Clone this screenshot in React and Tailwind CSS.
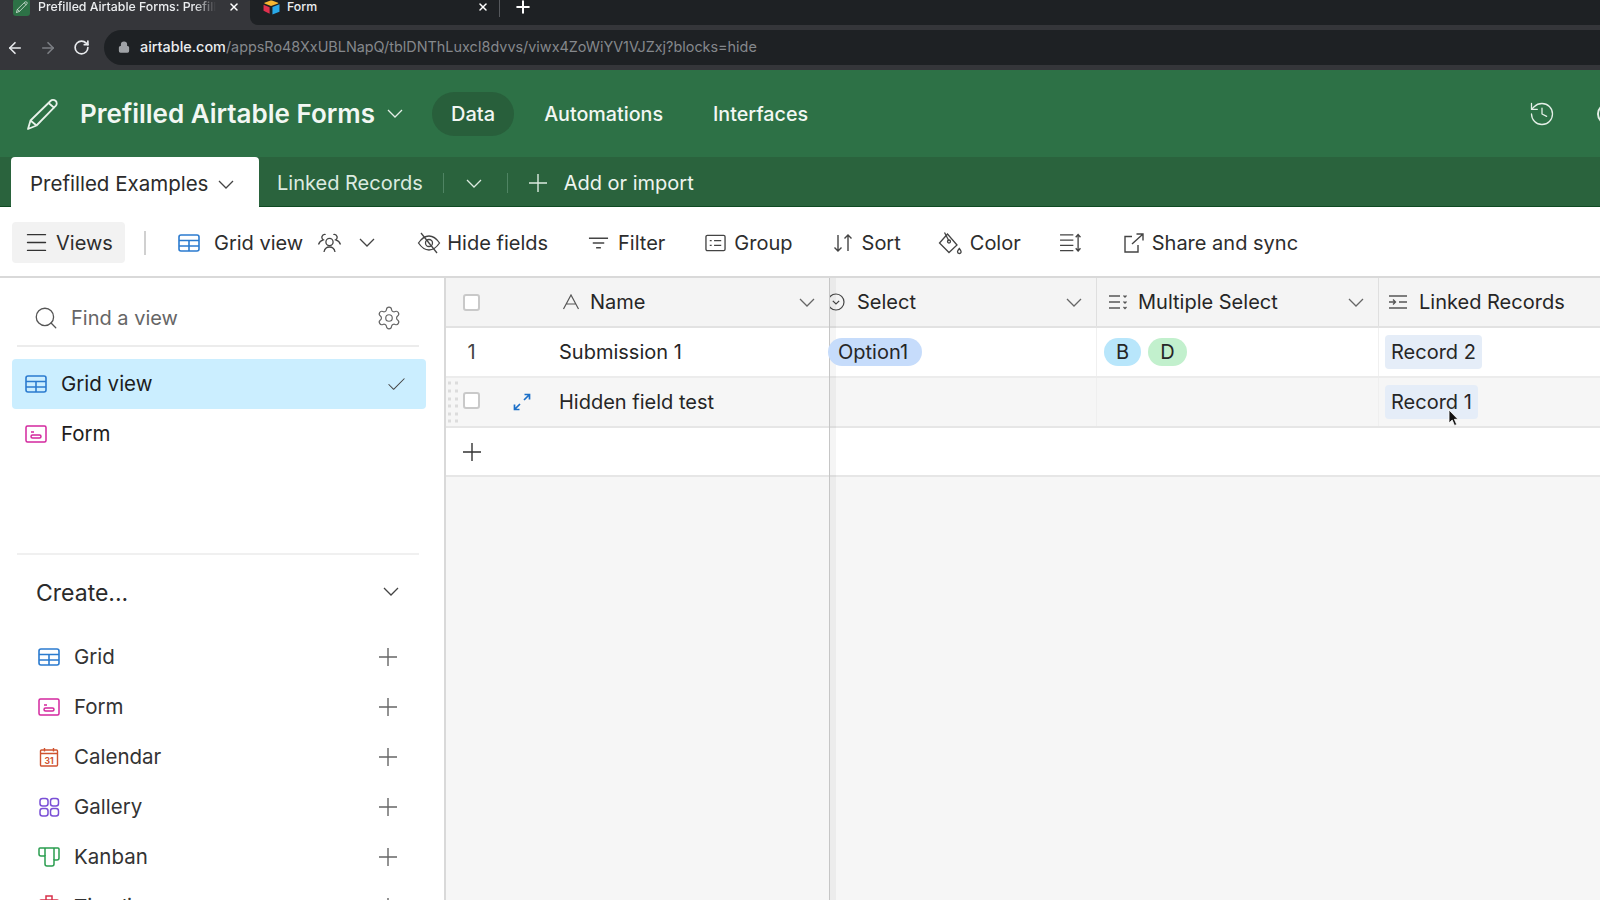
import React from 'react';
import { ArrowLeft, ArrowRight, RotateCw, Lock, X, History, Search, Settings, Check, Menu } from 'lucide-react';

const Chevron = ({ className }) => (
  <svg viewBox="0 0 16 9" fill="none" stroke="currentColor" strokeWidth="1.3" className={`w-[16px] h-[9px] shrink-0 ${className}`}>
    <path d="M1 1l7 7 7-7" />
  </svg>
);

const Cross = ({ className }) => (
  <svg viewBox="0 0 18 18" fill="none" stroke="currentColor" strokeWidth="1.4" className={`w-[18px] h-[18px] shrink-0 ${className}`}>
    <path d="M9 0v18M0 9h18" />
  </svg>
);

const GridIcon = ({ className }) => (
  <svg viewBox="0 0 22 18" fill="none" stroke="currentColor" strokeWidth="1.6" className={className}>
    <rect x="1" y="1" width="20" height="16" rx="2" />
    <path d="M1 6.5h20M1 12h20M11 6.5V17" />
  </svg>
);

const FormIcon = ({ className }) => (
  <svg viewBox="0 0 22 18" fill="none" stroke="currentColor" strokeWidth="1.5" className={className}>
    <rect x="1" y="1" width="20" height="16" rx="1.5" />
    <path d="M6 7h3" />
    <rect x="6" y="10" width="10" height="3" rx="1.5" />
  </svg>
);

const CalendarIcon = ({ className }) => (
  <svg viewBox="0 0 22 20" fill="none" stroke="currentColor" strokeWidth="1.4" className={className}>
    <rect x="2.5" y="3" width="17" height="16" rx="1" />
    <path d="M2.5 6.5h17M6.5 1v3.500M15.500 1v3.500" />
    <text x="11" y="16.5" textAnchor="middle" fontSize="8.5" fontWeight="700" stroke="none" fill="currentColor" fontFamily="Inter, sans-serif">31</text>
  </svg>
);

const GalleryIcon = ({ className }) => (
  <svg viewBox="0 0 22 20" fill="none" stroke="currentColor" strokeWidth="1.5" className={className}>
    <rect x="2" y="1.500" width="8" height="7.500" rx="2.500" />
    <rect x="12.500" y="1.500" width="8" height="7.500" rx="2.500" />
    <rect x="2" y="11.500" width="8" height="7.500" rx="2.500" />
    <rect x="12.500" y="11.500" width="8" height="7.500" rx="2.500" />
  </svg>
);

const KanbanIcon = ({ className }) => (
  <svg viewBox="0 0 22 20" fill="none" stroke="currentColor" strokeWidth="1.5" className={className}>
    <path d="M2 1h18a1 1 0 0 1 1 1v9a2 2 0 0 1-2 2h-3v4a2 2 0 0 1-2 2H9a2 2 0 0 1-2-2V9H3a2 2 0 0 1-2-2V2a1 1 0 0 1 1-1z" />
    <path d="M7 1v8M16 1v12" />
  </svg>
);

const TimelineIcon = ({ className }) => (
  <svg viewBox="0 0 22 24" fill="none" stroke="currentColor" strokeWidth="1.5" className={className}>
    <path d="M3 5h16a1.500 1.500 0 0 1 1.500 1.500V22H1.500V6.500A1.500 1.500 0 0 1 3 5z" />
    <path d="M8 5V1h6v4M8 1h6" />
  </svg>
);

const PeopleIcon = ({ className }) => (
  <svg viewBox="0 0 24 20" fill="none" stroke="currentColor" strokeWidth="1.3" className={className}>
    <circle cx="12" cy="9" r="3.600" />
    <path d="M6.500 19c.6-3.200 2.600-5 5.500-5s4.900 1.800 5.500 5" />
    <path d="M8.200 1.500A3 3 0 0 0 4.500 3.500c-.4 1.400.2 2.600 1.300 3.300C3.400 7.500 1.800 9 1 11.500" />
    <path d="M15.800 1.500a3 3 0 0 1 3.700 2c.4 1.400-.2 2.600-1.300 3.300 2.400.7 4 2.200 4.800 4.700" />
  </svg>
);

const EyeOffIcon = ({ className }) => (
  <svg viewBox="0 0 24 22" fill="none" stroke="currentColor" strokeWidth="1.3" className={className}>
    <path d="M1.500 11C5 5.800 8.500 4 12 4s7 1.800 10.500 7c-3.500 5.200-7 7-10.500 7s-7-1.800-10.500-7z" />
    <circle cx="12" cy="11" r="3.500" />
    <path d="M4 1l16 20" />
  </svg>
);

const FilterIcon = ({ className }) => (
  <svg viewBox="0 0 22 14" fill="none" stroke="currentColor" strokeWidth="1.4" className={className}>
    <path d="M1 2h20M5 7h12M8.500 12h5" />
  </svg>
);

const GroupIcon = ({ className }) => (
  <svg viewBox="0 0 22 18" fill="none" stroke="currentColor" strokeWidth="1.4" className={className}>
    <rect x="1" y="1" width="20" height="16" rx="1.500" />
    <path d="M5 6.500h2M5 11.500h2M9.500 6.500H17M9.500 11.500H17" />
  </svg>
);

const SortIcon = ({ className }) => (
  <svg viewBox="0 0 20 20" fill="none" stroke="currentColor" strokeWidth="1.4" className={className}>
    <path d="M5 2v16M1.500 14.500 5 18l3.500-3.500M15 18V2M11.500 5.500 15 2l3.500 3.500" />
  </svg>
);

const BucketIcon = ({ className }) => (
  <svg viewBox="0 0 24 24" fill="none" stroke="currentColor" strokeWidth="1.3" className={className}>
    <path d="M9.500 3 1.500 12l9.500 9.500L19 14z" />
    <path d="M6.500 1.500 11 10" />
    <circle cx="11" cy="10.500" r="1.500" />
    <path d="M21.300 17.500c-1.200 1.500-1.800 2.400-1.800 3.200a1.800 1.800 0 0 0 3.600 0c0-.8-.6-1.700-1.800-3.200z" />
  </svg>
);

const RowHeightIcon = ({ className }) => (
  <svg viewBox="0 0 24 20" fill="none" stroke="currentColor" strokeWidth="1.4" className={className}>
    <path d="M1 2h14M1 7.500h14M1 13h14M1 18.500h14" />
    <path d="M20 2v16.500M17.500 4.500 20 1.500l2.500 3M17.500 16 20 19l2.500-3" />
  </svg>
);

const ShareIcon = ({ className }) => (
  <svg viewBox="0 0 20 20" fill="none" stroke="currentColor" strokeWidth="1.4" className={className}>
    <path d="M8 3.500H1v15.500h13v-7" />
    <path d="M8 11 18.500 1.500M12.500 1h6.500v6.500" />
  </svg>
);

const Pencil = ({ className }) => (
  <svg viewBox="0 0 32 32" fill="none" stroke="currentColor" strokeWidth="1.8" strokeLinejoin="round" className={className}>
    <path d="M1 31l2.500-8.500L23.500 3c1.200-1.200 3.500-1.400 5-.2 1.500 1.300 1.600 3.600.4 4.900L9.500 27.500z" />
    <path d="M3.500 22.500l6 5M21.500 5l6 5" />
  </svg>
);

const AirtableLogo = () => (
  <svg viewBox="0 0 18 16" className="w-[17px] h-[15px] shrink-0">
    <path d="M8 .5 1.500 3c-.3.100-.3.500 0 .6L8.500 6.400l7.500-2.800c.3-.100.3-.5 0-.6L9.500.5z" fill="#f7b731" />
    <path d="M10 7.500v8l7.500-3V4.600z" fill="#29a9e8" />
    <path d="M.5 5v6.500L7 14.600V7.800z" fill="#e0304e" />
  </svg>
);

const SelectIcon = ({ className }) => (
  <svg viewBox="0 0 18 18" fill="none" stroke="currentColor" strokeWidth="1.2" className={className}>
    <circle cx="9" cy="9" r="8" />
    <path d="M5.800 7.800 9 11l3.200-3.200" />
  </svg>
);

const MultiSelectIcon = ({ className }) => (
  <svg viewBox="0 0 20 16" fill="none" stroke="currentColor" strokeWidth="1.3" className={className}>
    <path d="M1 2h11M1 8h11M1 14h11M15.500 1.500 17 3l1.500-1.500M15.500 7.500 17 9l1.500-1.500M15.500 13 17 14.500 18.500 13" />
  </svg>
);

const LinkedIcon = ({ className }) => (
  <svg viewBox="0 0 20 16" fill="none" stroke="currentColor" strokeWidth="1.3" className={className}>
    <path d="M1 2h18M11 8h8M1 14h18M1 8h6M5 5.500 7.500 8 5 10.500" />
  </svg>
);

const NameIcon = ({ className }) => (
  <svg viewBox="0 0 18 16" fill="none" stroke="currentColor" strokeWidth="1.2" className={className}>
    <path d="M1.500 15 9 1l7.500 14M4.500 10h9" />
  </svg>
);

const ExpandIcon = ({ className }) => (
  <svg viewBox="0 0 18 18" fill="none" stroke="currentColor" strokeWidth="1.700" className={className}>
    <path d="M11 7l5-5M11.500 1.500H16.500V6.500M7 11l-5 5M1.500 11.500V16.500H6.500" />
  </svg>
);

const DragDots = () => (
  <svg viewBox="0 0 11 42" fill="#dcdcdc" className="w-[11px] h-[42px] shrink-0">
    {[2, 10, 18, 25, 33, 40].map((y) => (
      <g key={y}>
        <rect x="0" y={y - 1.5} width="3" height="3" />
        <rect x="7" y={y - 1.5} width="3" height="3" />
      </g>
    ))}
  </svg>
);

const Checkbox = () => (
  <div className="w-[17px] h-[17px] rounded-[3px] border-2 border-[#c9c9c9] bg-white shrink-0" />
);

const createItems = [
  { label: 'Grid', Icon: GridIcon, color: 'text-[#2b7bcf] h-[18px]' },
  { label: 'Form', Icon: FormIcon, color: 'text-[#d3279e] h-[18px]' },
  { label: 'Calendar', Icon: CalendarIcon, color: 'text-[#cf5330] h-[20px]' },
  { label: 'Gallery', Icon: GalleryIcon, color: 'text-[#7a4fd6] h-[20px]' },
  { label: 'Kanban', Icon: KanbanIcon, color: 'text-[#2a9d4f] h-[20px]' },
  { label: 'Timeline', Icon: TimelineIcon, color: 'text-[#d8304a] h-[24px]' },
];

const BrowserChrome = () => (
  <div className="shrink-0">
    <div className="h-[25px] bg-[#35363a] flex text-[12.300px] font-medium">
      <div className="w-[250px] h-full flex items-center pb-[11px] pl-[13px] text-[#eceef0]">
        <div className="w-[17px] h-[17px] rounded-[3px] bg-[#2d7146] flex items-center justify-center shrink-0">
          <Pencil className="w-[12px] h-[12px] text-white" />
        </div>
        <span className="ml-[8px] w-[178px] overflow-hidden whitespace-nowrap [mask-image:linear-gradient(to_right,black_88%,transparent)]">Prefilled Airtable Forms: Prefill</span>
        <X className="w-[12px] h-[12px] ml-[12px] text-white shrink-0" strokeWidth={3} />
      </div>
      <div className="flex-1 h-full bg-[#1e2124] rounded-bl-lg flex items-center pb-[11px]">
        <div className="w-[249px] flex items-center pl-[13px] text-[#eceef0]">
          <AirtableLogo />
          <span className="ml-[7px]">Form</span>
          <X className="w-[12px] h-[12px] ml-auto mr-[10px] text-white" strokeWidth={3} />
        </div>
        <div className="w-px h-[20px] bg-[#55585c]" />
        <Cross className="ml-[14px] text-white scale-75 [stroke-width:2.6]" />
      </div>
    </div>
    <div className="h-[45px] bg-[#35363a] flex items-center">
      <ArrowLeft className="w-[18px] h-[18px] ml-[6px] text-[#e8eaed]" strokeWidth={2.200} />
      <ArrowRight className="w-[18px] h-[18px] ml-[15px] text-[#7c7f84]" strokeWidth={2.200} />
      <RotateCw className="w-[17px] h-[17px] ml-[16px] text-[#e8eaed]" strokeWidth={2.400} />
      <div className="ml-[14px] -mt-[1px] flex-1 h-[35px] bg-[#1e2124] rounded-l-full flex items-center pl-[14px] text-[14.400px] whitespace-nowrap overflow-hidden">
        <Lock className="w-[12px] h-[12px] text-[#a0a3a7] shrink-0" fill="#a0a3a7" strokeWidth={2.500} />
        <span className="ml-[10px] text-[#eceef0] font-medium">airtable.com</span>
        <span className="text-[#85888c]">/appsRo48XxUBLNapQ/tblDNThLuxcI8dvvs/viwx4ZoWiYV1VJZxj?blocks=hide</span>
      </div>
    </div>
  </div>
);

const AppHeader = () => (
  <div className="h-[87px] bg-[#2d7146] flex items-center text-[#f2f7f3] shrink-0 overflow-hidden">
    <Pencil className="w-[32px] h-[32px] ml-[27px] text-[#e8f2ea]" />
    <span className="ml-[21px] text-[26px] font-semibold whitespace-nowrap">Prefilled Airtable Forms</span>
    <Chevron className="ml-[12px] text-[#e4efe7]" />
    <div className="ml-[29px] h-[44px] px-[19px] rounded-full bg-[#285f3b] flex items-center text-[20px] font-medium">Data</div>
    <span className="ml-[30px] mt-[2px] text-[19.700px] font-medium">Automations</span>
    <span className="ml-[50px] mt-[2px] text-[19.700px] font-medium">Interfaces</span>
    <History className="w-[28px] h-[28px] ml-auto mr-[41px] text-[#e4efe7]" strokeWidth={1.100} />
    <div className="w-[22px] h-[22px] -mr-[19px] rounded-full border-2 border-[#e4efe7] shrink-0" />
  </div>
);

const TabBar = () => (
  <div className="h-[50px] bg-[#2a633d] border-b border-[#0f4a22] flex items-center text-[20px] shrink-0">
    <div className="ml-[11px] w-[248px] h-[50px] mt-[1px] pt-[4px] bg-white rounded-t-[4px] flex items-center pl-[19px] text-[#2b2b2b] text-[20.500px]">
      <span>Prefilled Examples</span>
      <Chevron className="ml-[10px] text-[#444]" />
    </div>
    <div className="flex items-center pt-[3px]">
      <span className="ml-[18px] text-[#dcebe0]">Linked Records</span>
      <div className="w-px h-[20px] bg-[#4f8463] ml-[20px]" />
      <Chevron className="ml-[22px] text-[#dcebe0]" />
      <div className="w-px h-[20px] bg-[#4f8463] ml-[25px]" />
      <Cross className="ml-[21px] text-[#dcebe0]" />
      <span className="ml-[17px] text-[#eef5f0]">Add or import</span>
    </div>
  </div>
);

const Toolbar = () => (
  <div className="h-[71px] pt-[2px] bg-white border-b-2 border-[#d9d9d9] flex items-center text-[20px] text-[#2d2d2d] shrink-0 whitespace-nowrap">
    <div className="ml-[12px] w-[113px] h-[41px] rounded-[4px] bg-[#f2f2f2] flex items-center pl-[11px]">
      <Menu className="w-[27px] h-[27px] text-[#333]" strokeWidth={1.200} />
      <span className="ml-[6px]">Views</span>
    </div>
    <div className="w-[2px] h-[24px] bg-[#d0d0d0] ml-[19px]" />
    <GridIcon className="w-[22px] h-[18px] ml-[32px] text-[#2b7bcf]" />
    <span className="ml-[14px]">Grid view</span>
    <PeopleIcon className="w-[25px] h-[20px] ml-[14px] text-[#444]" />
    <Chevron className="ml-[17px] text-[#444]" />
    <EyeOffIcon className="w-[24px] h-[22px] ml-[42px] text-[#444]" />
    <span className="ml-[6px]">Hide fields</span>
    <FilterIcon className="w-[21px] h-[14px] ml-[40px] text-[#444]" />
    <span className="ml-[9px]">Filter</span>
    <GroupIcon className="w-[21px] h-[18px] ml-[40px] text-[#444]" />
    <span className="ml-[8px]">Group</span>
    <SortIcon className="w-[20px] h-[20px] ml-[40px] text-[#444]" />
    <span className="ml-[9px]">Sort</span>
    <BucketIcon className="w-[24px] h-[24px] ml-[37px] text-[#444]" />
    <span className="ml-[8px]">Color</span>
    <RowHeightIcon className="w-[23px] h-[19px] ml-[38px] text-[#444]" />
    <ShareIcon className="w-[20px] h-[20px] ml-[42px] text-[#444]" />
    <span className="ml-[8px]">Share and sync</span>
  </div>
);

const Sidebar = () => (
  <aside className="w-[446px] border-r-2 border-[#d9d9d9] bg-white shrink-0 text-[20.500px] text-[#262626]">
    <div className="h-[67px] pt-[13px] flex items-center pl-[33px] text-[20px]">
      <Search className="w-[26px] h-[26px] text-[#555]" strokeWidth={1.200} />
      <span className="ml-[12px] text-[#666]">Find a view</span>
      <Settings className="w-[26px] h-[26px] ml-auto mr-[42px] text-[#666]" strokeWidth={1.100} />
    </div>
    <div className="h-[2px] bg-[#ececec] ml-[17px] mr-[25px]" />
    <div className="mt-[12px] ml-[12px] w-[414px] h-[50px] rounded-[4px] bg-[#cbeeff] flex items-center pl-[13px] text-[#1d1d1d]">
      <GridIcon className="w-[22px] h-[18px] text-[#2b7bcf]" />
      <span className="ml-[14px]">Grid view</span>
      <Check className="w-[23px] h-[23px] ml-auto mr-[18px] text-[#444]" strokeWidth={1.100} />
    </div>
    <div className="ml-[12px] w-[414px] h-[50px] flex items-center pl-[13px] text-[#1d1d1d]">
      <FormIcon className="w-[22px] h-[18px] text-[#d3279e]" />
      <span className="ml-[14px]">Form</span>
    </div>
    <div className="h-[2px] bg-[#f0f0f0] ml-[17px] mr-[25px] mt-[94px]" />
    <div className="h-[77px] pb-[1px] flex items-center pl-[36px] pr-[45px]">
      <span className="text-[23px] text-[#2b2b2b]">Create...</span>
      <Chevron className="ml-auto -mt-[4px] text-[#444]" />
    </div>
    {createItems.map(({ label, Icon, color }) => (
      <div key={label} className="h-[50px] flex items-center pl-[38px] pr-[47px]">
        <div className="w-[22px] flex justify-center shrink-0">
          <Icon className={`w-[22px] ${color}`} />
        </div>
        <span className="ml-[14px] text-[#333]">{label}</span>
        <Cross className="ml-auto text-[#666]" />
      </div>
    ))}
  </aside>
);

const GridPane = () => (
  <div className="flex-1 min-w-0 flex bg-[#f6f6f6] text-[20px] text-[#262626] overflow-hidden">
    {/* frozen columns */}
    <div className="w-[384px] shrink-0 border-r border-[#c6c6c6]">
      <div className="h-[50px] bg-[#f4f4f4] border-b-2 border-[#e2e2e2] flex items-center pl-[17px]">
        <Checkbox />
        <NameIcon className="w-[18px] h-[16px] ml-[82px] text-[#555]" />
        <span className="ml-[10px]">Name</span>
        <Chevron className="ml-auto mr-[14px] text-[#666]" />
      </div>
      <div className="h-[50px] bg-white border-b-2 border-[#ececec] flex items-center">
        <span className="w-[51px] text-center text-[#444]">1</span>
        <span className="ml-[62px]">Submission 1</span>
      </div>
      <div className="h-[50px] bg-[#f6f6f6] border-b-2 border-[#e6e6e6] flex items-center pl-[2px]">
        <DragDots />
        <div className="ml-[4px] -mt-[4px]"><Checkbox /></div>
        <ExpandIcon className="w-[18px] h-[18px] ml-[33px] text-[#1b6fc8]" />
        <span className="ml-[28px]">Hidden field test</span>
      </div>
      <div className="h-[49px] bg-white border-b-2 border-[#e6e6e6] flex items-center pl-[17px]">
        <Cross className="text-[#333]" />
      </div>
    </div>

    {/* scrolling columns */}
    <div className="relative flex-1 min-w-0">
      <div className="absolute top-0 bottom-0 left-0 w-[6px] bg-black/[0.04] pointer-events-none" />
      <div className="h-[50px] bg-[#f4f4f4] border-b-2 border-[#e2e2e2] flex">
        <div className="w-[267px] h-full flex items-center border-r border-[#dfdfdf] overflow-hidden shrink-0">
          <SelectIcon className="w-[18px] h-[18px] -ml-[3px] text-[#444] shrink-0" />
          <span className="ml-[12px] whitespace-nowrap">Select</span>
          <Chevron className="ml-auto mr-[14px] text-[#666]" />
        </div>
        <div className="w-[282px] h-full flex items-center border-r border-[#dfdfdf] pl-[11px] shrink-0">
          <MultiSelectIcon className="w-[20px] h-[16px] text-[#555]" />
          <span className="ml-[10px] whitespace-nowrap">Multiple Select</span>
          <Chevron className="ml-auto mr-[14px] text-[#666]" />
        </div>
        <div className="h-full flex items-center pl-[9px]">
          <LinkedIcon className="w-[20px] h-[16px] text-[#555]" />
          <span className="ml-[11px] whitespace-nowrap">Linked Records</span>
        </div>
      </div>
      <div className="h-[50px] bg-white border-b-2 border-[#ececec] flex">
        <div className="w-[267px] h-full border-r border-[#f0f0f0] flex items-center shrink-0">
          <span className="relative -ml-[2px] h-[28px] pl-[10px] pr-[14px] rounded-full bg-[#c6dcfb] flex items-center">Option1</span>
        </div>
        <div className="w-[282px] h-full border-r border-[#f0f0f0] flex items-center pl-[7px] gap-[7px] shrink-0">
          <span className="w-[37px] h-[28px] rounded-full bg-[#b8e6fb] flex items-center justify-center">B</span>
          <span className="w-[39px] h-[28px] rounded-full bg-[#c2f0cd] flex items-center justify-center">D</span>
        </div>
        <div className="h-full flex items-center pl-[6px]">
          <span className="h-[34px] px-[6px] rounded-[4px] bg-[#e5edf8] flex items-center whitespace-nowrap">Record 2</span>
        </div>
      </div>
      <div className="h-[50px] bg-[#f6f6f6] border-b-2 border-[#e6e6e6] flex">
        <div className="w-[267px] h-full border-r border-[#efefef] shrink-0" />
        <div className="w-[282px] h-full border-r border-[#efefef] shrink-0" />
        <div className="relative h-full flex items-center pl-[6px]">
          <span className="h-[34px] px-[6px] rounded-[4px] bg-[#e5edf8] flex items-center whitespace-nowrap">Record 1</span>
          {/* mouse pointer from the recording */}
          <svg viewBox="0 0 12 18" className="absolute left-[69px] top-[31px] w-[12px] h-[18px]">
            <path d="M1 1v13l3.200-3 2.300 5.500 2.200-1-2.300-5.200H10z" fill="#111" stroke="#fff" strokeWidth="0.800" />
          </svg>
        </div>
      </div>
      <div className="h-[49px] bg-white border-b-2 border-[#e6e6e6]" />
    </div>
  </div>
);

export default function App() {
  return (
    <div className="h-screen w-full overflow-hidden flex flex-col font-['Inter',sans-serif] bg-white">
      <BrowserChrome />
      <AppHeader />
      <TabBar />
      <Toolbar />
      <main className="flex-1 min-h-0 flex">
        <Sidebar />
        <GridPane />
      </main>
    </div>
  );
}
